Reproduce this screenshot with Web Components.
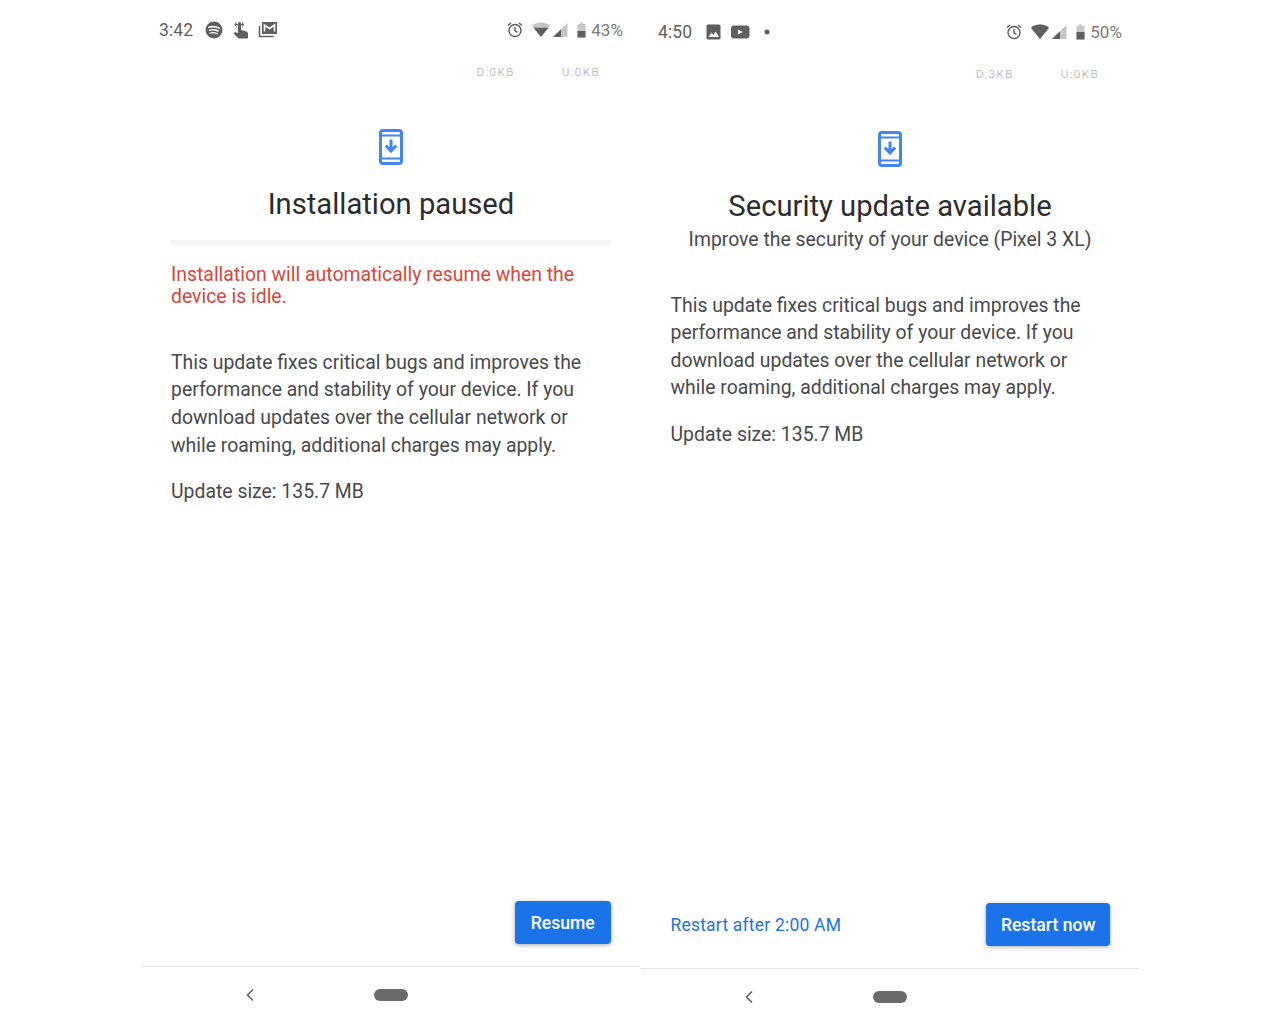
<!DOCTYPE html>
<html lang="en">
<head>
<meta charset="utf-8">
<title>System update</title>
<style>
  html, body { margin: 0; background: #fff; }
  body { font-family: Roboto, "Liberation Sans", sans-serif; }
  .screens { display: flex; width: 1280px; height: 1024px; overflow: hidden; padding-left: 142px; box-sizing: border-box; }
</style>
</head>
<body>
<div class="screens">
  <phone-screen time="3:42" battery="43" down="0" wifi="0.62">
    <svg slot="notifications" width="76" height="20" viewBox="0 0 76 20" fill="#5f5f5f">
      <circle cx="9" cy="10" r="8.500"/>
      <g fill="none" stroke="#fff" stroke-linecap="round"><path d="M3.800 7.200c3.600-1 7-.8 10.400.9" stroke-width="1.700"/><path d="M4.400 10.200c3-.8 6-.6 8.800.8" stroke-width="1.400"/><path d="M5 13c2.500-.6 5-.4 7.200.7" stroke-width="1.200"/></g>
      <path d="M33 3.500a1.500 1.500 0 0 1 3 0V10l5 1.200c1.300.4 2 1.400 2 2.800v3.500c0 .6-.4 1-1 1h-8c-.4 0-.7-.2-.9-.5L28.500 13.500l1-1c.4-.4 1-.5 1.500-.2l2 1.200z"/>
      <path d="M30.500 4.500h8M31.500 2.500 30 4.500l1.500 2M37 2.500 38.500 4.500 37 6.500" fill="none" stroke="#5f5f5f" stroke-width="1.100"/>
      <path d="M54.500 6v10.500h14" fill="none" stroke="#5f5f5f" stroke-width="1.500"/>
      <path d="M57 2h15v12H57z"/><path d="M59.500 11.500V5l5 3.500 5-3.500v6.500" fill="none" stroke="#fff" stroke-width="1.600"/>
    </svg>
    <update-header slot="hero" heading="Installation paused"></update-header>
    <div slot="hero" class="rule" style="height:5px;background:#f5f5f5;margin:0 29px 0 29px"></div>
    <notice-text slot="hero">Installation will automatically resume when the device is idle.</notice-text>
    <update-body slot="body" style="--body-top:40.800px"></update-body>
    <action-bar slot="actions" primary="Resume"></action-bar>
  </phone-screen>

  <phone-screen time="4:50" battery="50" down="3" wifi="1" style="margin:2px 0 0 1px">
    <svg slot="notifications" width="76" height="20" viewBox="0 0 76 20" fill="#5f5f5f" style="margin-left:1px">
      <path d="M1.500 4a1.500 1.500 0 0 1 1.500-1.500h11A1.500 1.500 0 0 1 15.500 4v12a1.500 1.500 0 0 1-1.500 1.500H3A1.500 1.500 0 0 1 1.500 16z"/>
      <path d="M3.500 15 6.500 10.500l2 2.500 2-3.500 3.500 5.500z" fill="#fff"/>
      <rect x="26" y="3.500" width="18.500" height="13" rx="3"/>
      <path d="M33 7.500v5l4.500-2.500z" fill="#fff"/>
      <circle cx="62" cy="10" r="2.500"/>
    </svg>
    <update-header slot="hero" heading="Security update available" subtitle="Improve the security of your device (Pixel 3 XL)"></update-header>
    <update-body slot="body" style="--body-top:38.700px;--body-left:29.500px"></update-body>
    <action-bar slot="actions" secondary="Restart after 2:00 AM" primary="Restart now"></action-bar>
  </phone-screen>
</div>

<script>
  // top of the phone: clock, notification icons, system icons, net speed line
  class StatusBar extends HTMLElement {
    connectedCallback() {
      const battery = +this.getAttribute("battery");
      const wifi = +this.getAttribute("wifi");
      const clipY = 17 - wifi * 15;
      const fillY = 20 - (battery / 100) * 14 - 3;
      const id = "w" + battery;
      this.attachShadow({ mode: "open" }).innerHTML = `
        <style>
          :host { display: block; color: #5f5f5f; }
          .bar { display: flex; align-items: center; height: 20px; padding: 20px 17px 0 17px; }
          .time { font-size: 17.500px; width: 46px; letter-spacing: .15px; }
          .right { margin-left: auto; display: flex; align-items: center; }
          .pct { font-size: 17px; letter-spacing: .1px; color: #7a7a7a; margin-left: 4px; }
          .speed { display: flex; justify-content: flex-end; gap: 47px; padding: 25px 40px 0 0; height: 15px;
            font: 300 11.500px/15px Roboto, sans-serif; color: #a8a8a8; letter-spacing: 1.500px; }
          svg { display: block; }
        </style>
        <div class="bar">
          <span class="time">${this.getAttribute("time")}</span>
          <slot></slot>
          <div class="right">
            <svg width="66" height="20" viewBox="0 0 66 20">
              <g fill="none" stroke="#5f5f5f" stroke-width="1.400">
                <circle cx="8" cy="10.500" r="6"/>
                <path d="M8 7v3.800l2.500 1.500"/>
                <path d="M1 5.500 4 3M15 5.500 12 3" stroke-width="1.600"/>
              </g>
              <defs><clipPath id="${id}"><rect x="24" y="${clipY}" width="22" height="20"/></clipPath></defs>
              <path d="M25 5.800c5-4.400 13-4.400 18 0l-9 11.200z" fill="#c4c4c4"/>
              <path d="M25 5.800c5-4.400 13-4.400 18 0l-9 11.200z" fill="#5f5f5f" clip-path="url(#${id})"/>
              <path d="M46 17 60.500 3V17z" fill="#c4c4c4"/>
              <path d="M46 17 54 9.300V17z" fill="#5f5f5f"/>
            </svg>
            <svg width="10" height="20" viewBox="0 0 10 20" style="margin-left:4px">
              <defs><clipPath id="${id}b"><rect x="0" y="${fillY}" width="10" height="20"/></clipPath></defs>
              <path d="M3 2.500h3v1.500h2.500v13.500H.5V4H3z" fill="#c8c8c8"/>
              <path d="M3 2.500h3v1.500h2.500v13.500H.5V4H3z" fill="#5f5f5f" clip-path="url(#${id}b)"/>
            </svg>
            <span class="pct">${battery}%</span>
          </div>
        </div>
        <div class="speed"><span>D:${this.getAttribute("down")}KB</span><span>U:0KB</span></div>`;
    }
  }

  // outer frame of one screen
  class PhoneScreen extends HTMLElement {
    connectedCallback() {
      const root = this.attachShadow({ mode: "open" });
      root.innerHTML = `
        <style>
          :host { display: flex; flex-direction: column; width: 498px; height: 1024px; flex: none; }
          .grow { flex: 1; }
        </style>
        <status-bar time="${this.getAttribute("time")}" battery="${this.getAttribute("battery")}"
          down="${this.getAttribute("down")}" wifi="${this.getAttribute("wifi")}">
          <slot name="notifications"></slot>
        </status-bar>
        <slot name="hero"></slot>
        <slot name="body"></slot>
        <div class="grow"></div>
        <slot name="actions"></slot>
        <nav-bar></nav-bar>`;
    }
  }

  class UpdateHeader extends HTMLElement {
    connectedCallback() {
      const subtitle = this.getAttribute("subtitle");
      this.attachShadow({ mode: "open" }).innerHTML = `
        <style>
          :host { display: block; text-align: center; padding-top: 49px; }
          svg { display: block; margin: 0 auto; }
          h1 { margin: 19px 0 0; font: 400 29.200px/40px Roboto, sans-serif; color: #2b2c2e; }
          p { margin: 1px 0 0; font: 400 19.400px/26px Roboto, sans-serif; color: #47494c; }
          .gap { height: ${subtitle ? 0 : 16}px; }
        </style>
        <svg width="24" height="36" viewBox="0 0 24 36">
          <rect x="1.500" y="1.500" width="21" height="33" rx="2.500" fill="none" stroke="#4285f4" stroke-width="3"/>
          <path d="M1.500 6.500h21M1.500 29.500h21" stroke="#4285f4" stroke-width="2"/>
          <path d="M12 10.500v11M6.800 16.500 12 22l5.200-5.500" fill="none" stroke="#4285f4" stroke-width="3"/>
        </svg>
        <h1>${this.getAttribute("heading")}</h1>
        ${subtitle ? `<p>${subtitle}</p>` : ""}
        <div class="gap"></div>`;
    }
  }

  class NoticeText extends HTMLElement {
    constructor() {
      super();
      this.attachShadow({ mode: "open" }).innerHTML = `
        <style>
          :host { display: block; padding: 19px 60px 0 29px; font: 400 19.400px/22px Roboto, sans-serif; color: #d8453b; }
        </style>
        <slot></slot>`;
    }
  }

  class UpdateBody extends HTMLElement {
    constructor() {
      super();
      this.attachShadow({ mode: "open" }).innerHTML = `
        <style>
          :host { display: block; padding: var(--body-top, 32px) 40px 0 var(--body-left, 29px); font: 400 19.400px/27.600px Roboto, sans-serif; color: #47494c; }
          p { margin: 0 0 18.500px; }
        </style>
        <p>This update fixes critical bugs and improves the performance and stability of your device. If you download updates over the cellular network or while roaming, additional charges may apply.</p>
        <p>Update size: 135.7 MB</p>`;
    }
  }

  class ActionBar extends HTMLElement {
    connectedCallback() {
      const secondary = this.getAttribute("secondary");
      this.attachShadow({ mode: "open" }).innerHTML = `
        <style>
          :host { display: flex; align-items: center; height: 44px; padding: 0 29px 21.500px 29.500px; }
          a { font: 400 17.500px Roboto, sans-serif; color: #1a73e8; letter-spacing: .2px; }
          button { margin-left: auto; height: 43.500px; min-width: 96.500px; padding: 0 14.500px; border: 0; border-radius: 4px; background: #1a73e8;
            color: #fff; font: 500 17.600px Roboto, sans-serif; box-shadow: 0 1px 4px rgba(0,0,0,.35); }
        </style>
        ${secondary ? `<a>${secondary}</a>` : ""}
        <button>${this.getAttribute("primary")}</button>`;
    }
  }

  class NavBar extends HTMLElement {
    constructor() {
      super();
      this.attachShadow({ mode: "open" }).innerHTML = `
        <style>
          :host { display: flex; align-items: center; justify-content: center; position: relative; height: 57px; border-top: 1.500px solid #e4e4e4; }
          .pill { width: 34px; height: 12px; border-radius: 6px; background: #6a6a6a; margin-top: -2px; }
          svg { position: absolute; left: 102px; top: 21px; }
        </style>
        <svg width="12" height="14" viewBox="0 0 12 14"><path d="M9 1.500 3.500 7 9 12.500" fill="none" stroke="#5f5f5f" stroke-width="1.600"/></svg>
        <div class="pill"></div>`;
    }
  }

  customElements.define("status-bar", StatusBar);
  customElements.define("phone-screen", PhoneScreen);
  customElements.define("update-header", UpdateHeader);
  customElements.define("notice-text", NoticeText);
  customElements.define("update-body", UpdateBody);
  customElements.define("action-bar", ActionBar);
  customElements.define("nav-bar", NavBar);
</script>
</body>
</html>
